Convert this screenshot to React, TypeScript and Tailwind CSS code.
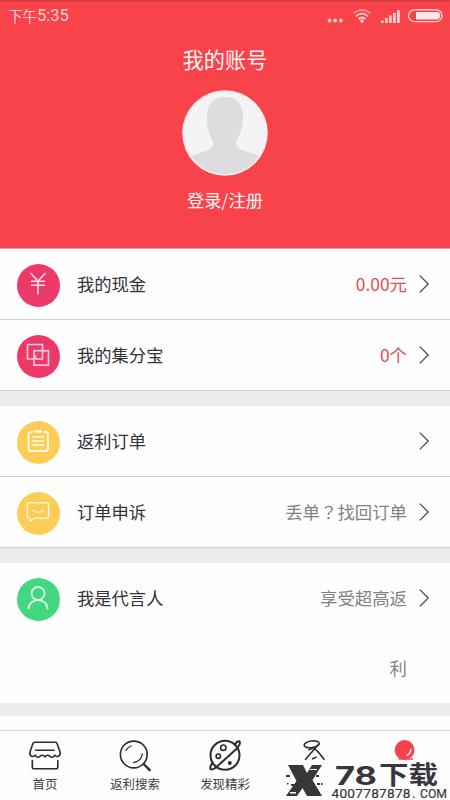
import React from 'react';

interface RowProps {
  color: string;
  icon: React.ReactNode;
  label: string;
  value?: string;
  valueColor?: string;
  valueWidth?: string;
  last?: boolean;
}

const Chevron = () => (
  <svg viewBox="0 0 12 20" className="w-3 h-5 shrink-0" fill="none" stroke="#45454d" strokeWidth="1.25">
    <path d="M1.8 1.6 L10.2 10 L1.8 18.4" />
  </svg>
);

const Row: React.FC<RowProps> = ({
  color,
  icon,
  label,
  value,
  valueColor = 'text-[#828286]',
  valueWidth = 'max-w-[126px]',
  last,
}) => (
  <div className={`flex items-start pl-[17px] pr-5 bg-[#fefefe] ${last ? '' : 'border-b border-[#cdcfd1]'}`}>
    <div className={`w-[43px] h-[43px] mt-[14.5px] rounded-full shrink-0 ${color}`}>
      <svg viewBox="0 0 43 43" className="w-full h-full" fill="none" strokeLinecap="round" strokeLinejoin="round">
        {icon}
      </svg>
    </div>
    <span className="ml-[17px] text-[17.3px] leading-[70px] text-[#33333b] whitespace-nowrap">{label}</span>
    <span
      className={`ml-auto text-right text-[17.4px] leading-[70px] font-['Noto_Sans_CJK_SC',sans-serif] ${valueWidth} ${valueColor}`}
    >
      {value?.split('？').map((part, i) => (
        <React.Fragment key={i}>
          {i > 0 && <span className="font-['Noto_Sans_CJK_TC',sans-serif]" lang="zh-TW">？</span>}
          {part}
        </React.Fragment>
      ))}
    </span>
    <div className="flex items-center h-[70px] ml-[11px]">
      <Chevron />
    </div>
  </div>
);

const YenIcon = (
  <g stroke="#fce0e9" strokeWidth="1.6" strokeLinecap="butt">
    <path d="M13.5 9 L21 17 L28.5 9 M21 17 V30.5 M14 17.3 H28 M14 21.3 H28" />
  </g>
);

const SquaresIcon = (
  <g stroke="#fbcbdc" strokeWidth="1.6" strokeLinejoin="miter">
    <path d="M16.5 24 H10.5 V9.5 H25.5 V15.3" />
    <rect x="17" y="15.7" width="14.5" height="14.5" />
    <path d="M25.5 15.5 V24 H18.5 V20.5" />
  </g>
);

const OrderIcon = (
  <g stroke="#fffbea">
    <path d="M15 11 H14 a2.5 2.5 0 0 0 -2.5 2.5 V27.5 a2.5 2.5 0 0 0 2.5 2.5 H28.5 a2.5 2.5 0 0 0 2.5 -2.5 V13.5 a2.5 2.5 0 0 0 -2.5 -2.5 H27.5" strokeWidth="1.8" />
    <path d="M19 10.5 H23.8" strokeWidth="2.6" />
    <path d="M16 15.8 H26.5 M16 20 H26.5 M16 24.2 H26.5" strokeWidth="1.7" />
  </g>
);

const ChatIcon = (
  <g stroke="#fff4d2" strokeWidth="1.5">
    <path d="M12 10.8 H30 a1.7 1.7 0 0 1 1.7 1.7 V24.5 a1.7 1.7 0 0 1 -1.7 1.7 H18 L13.5 29 L13 26.2 H12 a1.7 1.7 0 0 1 -1.7 -1.7 V12.5 a1.7 1.7 0 0 1 1.7 -1.7 Z" />
    <path d="M16 18 Q21 23 26.5 18" />
  </g>
);

const PersonIcon = (
  <g stroke="#dcfbe6" strokeWidth="1.8">
    <circle cx="21" cy="15.5" r="6.5" />
    <path d="M11.5 30.5 C12 19.3 30 19.3 30.5 30.5" />
  </g>
);

const StatusBar = () => (
  <div className="flex items-center h-8 pl-2 pr-[7px] text-[#ffd0d2]">
    <span className="text-[14.5px]">下午</span>
    <span className="font-['Roboto',sans-serif] text-[16.5px] mt-px">5:35</span>
    <svg viewBox="0 0 116 20" className="ml-auto w-[116px] h-5" fill="currentColor">
      <circle cx="2.5" cy="14.5" r="1.9" />
      <circle cx="8.2" cy="14.5" r="1.9" />
      <circle cx="13.9" cy="14.5" r="1.9" />
      <g fill="none" stroke="currentColor" strokeWidth="1.8">
        <path d="M26.5 7.5 Q35 0.5 43.5 7.5" opacity="0.5" />
        <path d="M29 10.3 Q35 5 41 10.3" />
        <path d="M31.5 13 Q35 10 38.5 13" />
      </g>
      <circle cx="35" cy="15" r="1.8" />
      <path d="M54 14.5h2.6V17H54z M58 12h2.7v5H58z M62 9.5h2.7V17H62z M66 6.8h2.7V17H66z M70 4h2.8v13H70z" />
      <rect x="81.5" y="3.8" width="33.5" height="11.8" rx="5.9" fill="none" stroke="currentColor" strokeWidth="1.4" />
      <path d="M89 6 H109.5 a3.7 3.7 0 0 1 0 7.4 H89 Z" fill="#ffe6e6" />
    </svg>
  </div>
);

const Avatar = () => (
  <svg viewBox="0 0 86 86" className="w-[86px] h-[86px]">
    <defs>
      <clipPath id="avatar">
        <circle cx="43" cy="43" r="41" />
      </clipPath>
    </defs>
    <circle cx="43" cy="43" r="42.8" fill="#fdeaea" />
    <circle cx="43" cy="43" r="41" fill="#f4f3f5" />
    <path
      clipPath="url(#avatar)"
      fill="#dddcde"
      d="M43 7 C54 7 61 14 61 26 C61 36 59 43 55 49 C53 53 54 57 58 59 C64 62 71 63 77 66 V86 H8 V67 C15 63 23 62 28 59 C32 57 32 53 30 49 C26 43 25 36 25 26 C25 14 32 7 43 7 Z"
    />
  </svg>
);

const tabs = [
  {
    label: '首页',
    icon: (
      <>
        <path d="M7 4.3 H27 a2.4 2.4 0 0 1 2.2 1.5 L32 14 C33 17.5 29.5 20 26.7 17.2 Q24.5 20.8 21.8 18.2 Q19.5 16 17 18.8 Q14.5 16 12.2 18.2 Q9.5 20.8 7.3 17.2 C4.5 20 1 17.5 2 14 L4.8 5.8 A2.4 2.4 0 0 1 7 4.3 Z" />
        <path d="M7.5 12.3 H26" />
        <path d="M4.3 22.5 V29 a1.8 1.8 0 0 0 1.8 1.8 H28 a1.8 1.8 0 0 0 1.8 -1.8 V22.5" />
      </>
    ),
  },
  {
    label: '返利搜索',
    icon: (
      <>
        <circle cx="15.8" cy="16.5" r="13.4" />
        <path d="M7.8 12.5 Q10 9.1 13 8 M24.3 16 Q23.5 23 15.7 24.5" strokeWidth="1.3" />
        <path d="M25.7 26 L31.7 32.2" strokeWidth="2.4" />
      </>
    ),
  },
  {
    label: '发现精彩',
    icon: (
      <>
        <circle cx="17" cy="17.3" r="14.5" strokeWidth="2.1" />
        <path d="M27 6.5 Q28.5 2.8 31.5 3.2 Q33 5.5 29.5 10 L9 28.5 Q4.5 32.5 2.5 31 Q1.5 28.5 4.5 25" strokeWidth="2" />
        <circle cx="15.3" cy="9.7" r="2.7" />
        <circle cx="10.3" cy="18.2" r="2.2" />
        <circle cx="21.8" cy="25" r="1.2" fill="#2c2c33" />
      </>
    ),
  },
  {
    label: '',
    icon: (
      <>
        <ellipse cx="13.7" cy="6.3" rx="7.6" ry="3.3" transform="rotate(-8 13.7 6.3)" />
        <path d="M20.5 6.5 L7.5 21.3 M11 11.7 L15 10 Q18.5 11 26 21.3" />
        <path d="M14.5 20.8 L18 19.3" />
      </>
    ),
  },
  {
    label: '',
    icon: (
      <>
        <circle cx="16.6" cy="12" r="9.9" fill="#f9414b" stroke="none" />
        <path d="M11 21 H24.5" stroke="#f9414b" strokeWidth="1.5" />
        <path d="M23 11.5 Q22.5 15.5 19 17.5" stroke="#fff" strokeWidth="1.3" />
      </>
    ),
  },
];

const Watermark = () => (
  <div className="absolute left-[285px] top-[30px] w-[165px] h-[39px] text-[#37373b]">
    <svg viewBox="0 0 165 39" className="w-full h-full" fill="currentColor">
      <path d="M3 4 H18 L22 12 L27 4 H37 L27.5 19 L37 35 H22 L17.5 27 L12 35 H1 L11.5 20 Z" />
      <path d="M1 14h4v2H1z M6 23h5v2H6z M31 14h3v2h-3z M32 22h3v2h-3z M36 22h1.5v2H36z M2 22h1.5v1.5H2z" />
      <path d="M5 31h6v1.5H5z M25 8h7v1H25z" fill="#fdfdfd" />
      <text x="50" y="24.3" textLength="42" lengthAdjust="spacingAndGlyphs" fontSize="25.5" fontWeight="700" fontFamily="Inter, sans-serif">78</text>
      <text x="94" y="23" textLength="59" lengthAdjust="spacingAndGlyphs" fontSize="24.5" fontWeight="700" fontFamily="'Noto Sans CJK SC', sans-serif">下载</text>
      <g fontSize="13.6" fontFamily="Roboto, sans-serif" stroke="currentColor" strokeWidth="0.2">
        <text x="46.5" y="36.8" textLength="79" lengthAdjust="spacing">4007787878</text>
        <text x="127" y="36.8">.</text>
        <text x="135" y="36.8" textLength="27" lengthAdjust="spacingAndGlyphs">COM</text>
      </g>
    </svg>
  </div>
);

const TabBar = () => (
  <nav className="relative grid grid-cols-5 h-[70px] shrink-0 border-t border-[#d3d5d7] bg-[#fdfdfd]">
    {tabs.map((tab, i) => (
      <div key={i} className="flex flex-col items-center pt-[7px]">
        <svg viewBox="0 0 34 34" className="w-[34px] h-[34px]" fill="none" stroke="#2c2c33" strokeWidth="1.6" strokeLinecap="round" strokeLinejoin="round">
          {tab.icon}
        </svg>
        <span className="mt-[3px] text-[12.4px] leading-[18px] text-[#3c3c42]">{tab.label}</span>
      </div>
    ))}
    <Watermark />
  </nav>
);

const App: React.FC = () => {
  return (
    <div className="flex flex-col w-[450px] h-[800px] overflow-hidden bg-[#e9edee] font-['Noto_Sans_CJK_SC',sans-serif]">
      <header className="h-[249px] shrink-0 bg-[#f9434b] border-b border-[#d9a3a7]">
        <div className="h-[2px] bg-linear-to-b from-[#cf3a42] to-[#ee4149]" />
        <div className="-mt-[2px]">
          <StatusBar />
        </div>
        <div className="flex flex-col items-center">
          <h1 className="mt-3 text-[21.2px] leading-[30px] text-[#fff3f3]">我的账号</h1>
          <div className="mt-4">
            <Avatar />
          </div>
          <p className="mt-[11px] text-[17.3px] leading-[26px] text-[#fff3f3]">登录/注册</p>
        </div>
      </header>

      <main className="flex flex-col flex-1 overflow-hidden">
        <section>
          <Row color="bg-[#ed3968]" icon={YenIcon} label="我的现金" value="0.00元" valueColor="text-[#e24b54]" />
          <Row color="bg-[#ed3968]" icon={SquaresIcon} label="我的集分宝" value="0个" valueColor="text-[#e24b54]" />
        </section>
        <section className="mt-[15px]">
          <Row color="bg-[#ffcd57]" icon={OrderIcon} label="返利订单" />
          <Row color="bg-[#ffcd57]" icon={ChatIcon} label="订单申诉" value="丢单？找回订单" />
        </section>
        <section className="mt-[15px]">
          <Row
            color="bg-[#43d780]"
            icon={PersonIcon}
            label="我是代言人"
            value="享受超高返利"
            valueWidth="max-w-[90px]"
            last
          />
        </section>
        <section className="mt-[13px] flex-1 bg-[#fefefe]" />
      </main>

      <TabBar />
    </div>
  );
};

export default App;
